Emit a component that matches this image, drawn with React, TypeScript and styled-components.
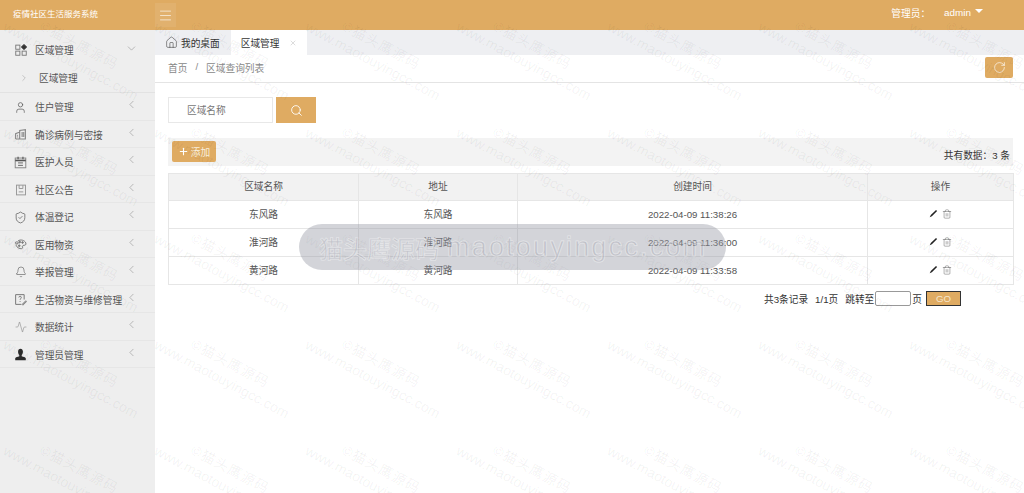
import React from 'react'
import styled, { createGlobalStyle } from 'styled-components'
import {
  Activity,
  Bell,
  ChevronDown,
  ChevronLeft,
  ChevronRight,
  Home,
  Menu,
  Plus,
  RotateCw,
  Search,
  ShieldCheck,
  Trash2,
  User,
  X,
} from 'lucide-react'

const ACCENT = '#dfab62'

const GlobalStyle = createGlobalStyle`
  html, body {
    margin: 0;
    height: 100%;
    overflow: hidden;
    background: #fff;
    font-family: "Liberation Sans", "Noto Sans CJK SC", sans-serif;
    font-size: 9.7px;
    color: #555;
  }
  * { box-sizing: border-box; }
`

const GridIcon = () => (
  <svg width="12" height="12" viewBox="0 0 16 16" fill="none" stroke="#777" strokeWidth="1.2">
    <rect x="1" y="1.500" width="5.500" height="5.500" />
    <rect x="1" y="9.500" width="5.500" height="5.500" />
    <rect x="9.500" y="9.500" width="5.500" height="5.500" />
    <path d="M12 .5l3.500 3.500-3.500 3.500L8.500 4z" fill="#333" stroke="#333" />
  </svg>
)

const CaseIcon = () => (
  <svg width="13" height="13" viewBox="0 0 16 16" fill="none" stroke="#888" strokeWidth="1.400">
    <path d="M2 13.500V7l5-2v8.500M7 5V3l7-1v11.500H2" />
    <path d="M4 9h1M4 11h1M10 5v6M12 5v6" />
  </svg>
)

const CalendarIcon = () => (
  <svg width="13" height="13" viewBox="0 0 16 16" fill="none" stroke="#888" strokeWidth="1.200">
    <rect x="1.500" y="2.500" width="13" height="12" />
    <path d="M1.500 5.500h13" stroke="#555" strokeWidth="2" />
    <path d="M5 1v3M11 1v3" stroke="#555" strokeWidth="1.400" />
    <path d="M5 8.500h6M5 11.500h6" stroke="#666" />
  </svg>
)

const NoticeIcon = () => (
  <svg width="12" height="12" viewBox="0 0 16 16" fill="none" stroke="#999" strokeWidth="1.300">
    <rect x="2" y="1.500" width="12" height="13" />
    <path d="M5.500 1.500v4.500h5V1.500M5 10.500h6" />
  </svg>
)

const SupplyIcon = () => (
  <svg width="13" height="13" viewBox="0 0 16 16" fill="none" stroke="#777" strokeWidth="1.200">
    <path d="M5 3.500C8 1.500 13 2.500 14.500 6c1 2.500-1 3-2.500 3-1.500 0-2 1.500-1.500 2.500.5 1.500-1 2-3 1.500C4 12 2.500 10 2.500 8" />
    <ellipse cx="3.500" cy="6" rx="1.800" ry="1.300" />
    <circle cx="7" cy="5" r="1" fill="#777" />
    <circle cx="10.500" cy="5.500" r="1" fill="#777" />
    <circle cx="6.500" cy="9.500" r="1" fill="#777" />
  </svg>
)

const RepairIcon = () => (
  <svg width="13" height="13" viewBox="0 0 16 16" fill="none" stroke="#777" strokeWidth="1.200">
    <path d="M9 14H2V2h10.500v6" />
    <path d="M6 5.500C6 3.500 9 3.500 9 5.500c0 1.300-1.500 1.300-1.500 2.800M7.500 10v1" />
    <path d="M10 14l4.500-4.500 1 1L11 15z" fill="#999" stroke="#888" />
  </svg>
)

const AdminIcon = () => (
  <svg width="13" height="13" viewBox="0 0 16 16" fill="#2b2b2b">
    <path d="M5 4.500C5 2.500 6.300 1 8 1s3 1.500 3 3.500c0 1.800-.7 3.300-1.500 4.200v1.300c2 .8 4.500 1.200 5 2.500v2.500H1.500v-2.500c.5-1.300 3-1.700 5-2.500V8.700C5.700 7.800 5 6.300 5 4.500z" />
  </svg>
)

const PencilIcon = () => (
  <svg width="9" height="9" viewBox="0 0 10 10" fill="#222">
    <path d="M7.800 1l1.200 1.200-5.800 5.800L.8 9.200 2 6.800z" />
  </svg>
)

const menu: { label: string; icon: React.ReactNode }[] = [
  { label: '住户管理', icon: <User size={13} strokeWidth={1.3} color="#555" /> },
  { label: '确诊病例与密接', icon: <CaseIcon /> },
  { label: '医护人员', icon: <CalendarIcon /> },
  { label: '社区公告', icon: <NoticeIcon /> },
  { label: '体温登记', icon: <ShieldCheck size={13} strokeWidth={1.3} color="#555" /> },
  { label: '医用物资', icon: <SupplyIcon /> },
  { label: '举报管理', icon: <Bell size={12} strokeWidth={1.2} color="#555" /> },
  { label: '生活物资与维修管理', icon: <RepairIcon /> },
  { label: '数据统计', icon: <Activity size={12} strokeWidth={1} color="#777" /> },
  { label: '管理员管理', icon: <AdminIcon /> },
]

const rows = [
  { name: '东风路', address: '东风路', time: '2022-04-09 11:38:26' },
  { name: '淮河路', address: '淮河路', time: '2022-04-09 11:36:00' },
  { name: '黄河路', address: '黄河路', time: '2022-04-09 11:33:58' },
]

const App = () => {
  return (
    <Page>
      <GlobalStyle />
      <Header>
        <Brand>疫情社区生活服务系统</Brand>
        <MenuToggle>
          <Menu size={15} strokeWidth={1} color="#fff" />
        </MenuToggle>
        <UserInfo>
          <span>管理员：</span>
          <UserName>admin</UserName>
          <Caret />
        </UserInfo>
      </Header>
      <Body>
        <Sidebar>
          <TopItem>
            <IconSlot>
              <GridIcon />
            </IconSlot>
            <ItemLabel>区域管理</ItemLabel>
            <Arrow>
              <ChevronDown size={13} strokeWidth={1} />
            </Arrow>
          </TopItem>
          <SubItem>
            <ChevronRight size={10} strokeWidth={1} color="#888" />
            <span>区域管理</span>
          </SubItem>
          {menu.map((m) => (
            <MenuItem key={m.label}>
              <IconSlot>{m.icon}</IconSlot>
              <ItemLabel>{m.label}</ItemLabel>
              <Arrow>
                <ChevronLeft size={13} strokeWidth={1} />
              </Arrow>
            </MenuItem>
          ))}
        </Sidebar>
        <Main>
          <TabBar>
            <Tab>
              <Home size={13} strokeWidth={1} color="#333" />
              我的桌面
            </Tab>
            <Tab $active>
              区域管理
              <X size={8} strokeWidth={1} color="#999" />
            </Tab>
          </TabBar>
          <Crumbs>
            <CrumbText>
              <span>首页</span>
              <span>/</span>
              <span>区域查询列表</span>
            </CrumbText>
            <RefreshButton>
              <RotateCw size={13} strokeWidth={1.2} color="#fff" />
            </RefreshButton>
          </Crumbs>
          <Content>
            <SearchRow>
              <SearchInput placeholder="区域名称" />
              <SearchButton>
                <Search size={13} strokeWidth={1.6} color="#fff" />
              </SearchButton>
            </SearchRow>
            <Toolbar>
              <AddButton>
                <Plus size={11} strokeWidth={2.4} color="#fff" />
                添加
              </AddButton>
              <Total>共有数据：3 条</Total>
            </Toolbar>
            <DataTable>
              <colgroup>
                <col width={190} />
                <col width={159} />
                <col width={350} />
                <col width={146} />
              </colgroup>
              <thead>
                <tr>
                  <HeadCell>区域名称</HeadCell>
                  <HeadCell>地址</HeadCell>
                  <HeadCell>创建时间</HeadCell>
                  <HeadCell>操作</HeadCell>
                </tr>
              </thead>
              <tbody>
                {rows.map((r) => (
                  <tr key={r.name}>
                    <Cell>{r.name}</Cell>
                    <Cell>{r.address}</Cell>
                    <Cell>{r.time}</Cell>
                    <Cell>
                      <Actions>
                        <PencilIcon />
                        <Trash2 size={10} strokeWidth={1.1} color="#555" />
                      </Actions>
                    </Cell>
                  </tr>
                ))}
              </tbody>
            </DataTable>
            <Pager>
              <span>共3条记录</span>
              <span>1/1页</span>
              <JumpLabel>
                跳转至
                <PageInput />页
              </JumpLabel>
              <GoButton>GO</GoButton>
            </Pager>
          </Content>
        </Main>
      </Body>
      <Watermarks>
        {Array.from({ length: 35 }).map((_, i) => (
          <Mark key={i}>
            <MarkText>
              <MarkTitle>©猫头鹰源码</MarkTitle>
              <span>www.maotouyingcc.com</span>
            </MarkText>
          </Mark>
        ))}
      </Watermarks>
      <Stamp>
        猫头鹰源码 <StampLatin>maotouyingcc.com</StampLatin>
      </Stamp>
    </Page>
  )
}

const Page = styled.div`
  position: relative;
  display: flex;
  flex-direction: column;
  height: 100vh;
  overflow: hidden;
`

const Header = styled.header`
  display: flex;
  align-items: center;
  flex: 0 0 30px;
  background: ${ACCENT};
  color: #fff;
`

const Brand = styled.div`
  width: 155px;
  padding: 0 0 4px 13px;
  font-size: 8.5px;
`

const MenuToggle = styled.div`
  display: flex;
  align-items: center;
  justify-content: center;
  width: 21px;
  height: 24px;
  background: rgba(255, 255, 255, 0.08);
`

const UserInfo = styled.div`
  display: flex;
  align-items: center;
  margin-left: auto;
  padding-right: 41px;
  padding-bottom: 5px;
`

const UserName = styled.span`
  margin-left: 14px;
  font-size: 9.9px;
`

const Caret = styled.i`
  width: 0;
  height: 0;
  margin: 0 0 3px 4px;
  border: 4.5px solid transparent;
  border-top-color: #fff;
  border-bottom-width: 0;
`

const Body = styled.div`
  display: flex;
  flex: 1;
  min-height: 0;
`

const Sidebar = styled.nav`
  flex: 0 0 155px;
  background: #eee;
`

const MenuItem = styled.div`
  position: relative;
  display: flex;
  align-items: center;
  height: 27.5px;
  padding: 2px 0 0 13px;
  border-bottom: 1px solid #e6e6e6;
  color: #555;
`

const TopItem = styled(MenuItem)`
  height: 35px;
  padding-top: 4px;
  border-bottom: 0;
`

const SubItem = styled.div`
  display: flex;
  align-items: center;
  gap: 10px;
  height: 28px;
  padding: 0 0 2px 19px;
  border-bottom: 1px solid #e2e2e2;
`

const IconSlot = styled.span`
  display: flex;
  justify-content: center;
  width: 15px;
  margin-right: 7px;
`

const ItemLabel = styled.span`
  white-space: nowrap;
`

const Arrow = styled.span`
  position: absolute;
  left: 125px;
  top: 5px;
  display: flex;
  color: #888;
  ${TopItem} & {
    top: 12px;
  }
`

const Main = styled.main`
  flex: 1;
  min-width: 0;
`

const TabBar = styled.div`
  display: flex;
  height: 25px;
  background: #eeeff2;
`

const Tab = styled.div<{ $active?: boolean }>`
  display: flex;
  align-items: center;
  gap: ${(p) => (p.$active ? '9px' : '3px')};
  padding: ${(p) => (p.$active ? '0 10px 0 10px' : '0 11px 0 10px')};
  background: ${(p) => (p.$active ? '#fff' : 'transparent')};
  color: #333;
`

const Crumbs = styled.div`
  display: flex;
  justify-content: space-between;
  align-items: center;
  height: 28px;
  padding: 0 11px 3px 13px;
  border-bottom: 1px solid #e4e4e4;
`

const CrumbText = styled.div`
  display: flex;
  gap: 8px;
  margin-top: 2px;
  color: #888;
`

const RefreshButton = styled.button`
  display: flex;
  align-items: center;
  justify-content: center;
  width: 28px;
  height: 21px;
  padding: 0;
  border: 0;
  border-radius: 2px;
  background: ${ACCENT};
`

const Content = styled.div`
  padding: 14px 11px 0 13px;
`

const SearchRow = styled.div`
  display: flex;
  gap: 3px;
`

const SearchInput = styled.input`
  width: 105px;
  height: 26px;
  padding: 0 18px;
  border: 1px solid #e8e8e8;
  font: inherit;
  outline: none;
  &::placeholder {
    color: #777;
  }
`

const SearchButton = styled.button`
  display: flex;
  align-items: center;
  justify-content: center;
  width: 40px;
  height: 26px;
  padding: 0;
  border: 0;
  background: ${ACCENT};
`

const Toolbar = styled.div`
  display: flex;
  justify-content: space-between;
  height: 28px;
  margin-top: 15px;
  padding: 3px 3px 0 4px;
  background: #f3f3f3;
`

const AddButton = styled.button`
  display: flex;
  align-items: center;
  justify-content: center;
  gap: 2px;
  width: 44px;
  height: 21px;
  padding: 0;
  border: 0;
  border-radius: 2px;
  background: ${ACCENT};
  color: #f8eedd;
  font: inherit;
`

const Total = styled.span`
  align-self: flex-end;
  padding-bottom: 4px;
  color: #333;
`

const DataTable = styled.table`
  width: 845px;
  margin-top: 7px;
  table-layout: fixed;
  border-collapse: collapse;
`

const HeadCell = styled.th`
  height: 27px;
  padding: 0 0 2px;
  border: 1px solid #e6e6e6;
  background: #f2f2f2;
  font-weight: 400;
  text-align: center;
`

const Cell = styled.td`
  height: 28px;
  padding: 0 0 1px;
  border: 1px solid #e6e6e6;
  text-align: center;
`

const Actions = styled.div`
  display: flex;
  justify-content: center;
  gap: 4px;
`

const Pager = styled.div`
  display: flex;
  align-items: center;
  justify-content: flex-end;
  gap: 7px;
  margin-top: 6px;
  padding-right: 52px;
  color: #333;
`

const JumpLabel = styled.span`
  display: flex;
  align-items: center;
`

const PageInput = styled.input`
  width: 36px;
  height: 15px;
  margin: 0 1px;
  border: 1px solid #999;
  border-radius: 2px;
  outline: none;
`

const GoButton = styled.button`
  width: 35px;
  height: 15px;
  margin-left: -3px;
  padding: 0;
  border: 1px solid #333;
  background: ${ACCENT};
  color: #f5e6cc;
  font: inherit;
`

const Watermarks = styled.div`
  position: absolute;
  inset: 0;
  display: grid;
  grid-template-columns: repeat(7, 151px);
  grid-auto-rows: 106px;
  pointer-events: none;
`

const Mark = styled.div`
  display: flex;
  align-items: center;
  justify-content: center;
`

const MarkText = styled.div`
  display: flex;
  flex-direction: column;
  align-items: center;
  flex: none;
  font-size: 14px;
  line-height: 18px;
  color: rgba(0, 0, 0, 0.06);
  white-space: nowrap;
  transform: rotate(28deg);
`

const MarkTitle = styled.span`
  letter-spacing: 1px;
`

const Stamp = styled.div`
  position: absolute;
  left: 299px;
  top: 224px;
  display: flex;
  align-items: center;
  gap: 8px;
  width: 427px;
  height: 46px;
  padding-left: 20px;
  border-radius: 23px;
  background: rgba(150, 153, 165, 0.42);
  color: rgba(130, 132, 145, 0.25);
  font-size: 24px;
  white-space: nowrap;
  -webkit-text-stroke: 1px rgba(255, 255, 255, 0.42);
  pointer-events: none;
`

const StampLatin = styled.span`
  font-size: 27px;
  letter-spacing: 2.2px;
`

export default App
